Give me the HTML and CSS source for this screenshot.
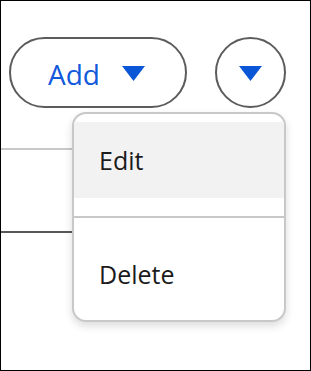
FILE: index.html
```html
<!DOCTYPE html>
<html>
<head>
<meta charset="utf-8">
<link rel="stylesheet" href="styles.css">
</head>
<body>
<div class="frame">
  <div class="toolbar">
    <button class="btn-add">
      <span class="btn-label">Add</span>
      <svg class="caret" width="23" height="15" viewBox="0 0 23 15"><polygon points="0,0 23,0 11.5,15" fill="#0b56d6"/></svg>
    </button>
    <button class="btn-circle">
      <svg class="caret" width="23" height="15" viewBox="0 0 23 15"><polygon points="0,0 23,0 11.5,15" fill="#0b56d6"/></svg>
    </button>
  </div>
  <div class="rows">
    <div class="line line-light"></div>
    <div class="line line-dark"></div>
  </div>
  <div class="menu">
    <div class="menu-item active">Edit</div>
    <div class="menu-divider"></div>
    <div class="menu-item">Delete</div>
  </div>
</div>
</body>
</html>
```
FILE: styles.css
```css
html, body {
  margin: 0;
  padding: 0;
  background: #fff;
}
.frame {
  position: relative;
  width: 311px;
  height: 371px;
  box-sizing: border-box;
  border: 1px solid #000;
  font-family: "Open Sans", "Noto Sans", sans-serif;
  overflow: hidden;
}
.toolbar {
  display: flex;
  align-items: center;
  gap: 28px;
  margin-top: 36px;
  padding-left: 8px;
}
.btn-add {
  box-sizing: border-box;
  width: 178px;
  height: 71px;
  border: 2px solid #5c5c5c;
  border-radius: 36px;
  background: #fff;
  display: flex;
  align-items: center;
  padding: 0 0 0 37px;
  gap: 22px;
  font-family: inherit;
  cursor: pointer;
}
.btn-label {
  font-size: 28px;
  color: #1259dc;
  line-height: 1;
  margin-top: 2px;
}
.btn-circle {
  box-sizing: border-box;
  width: 71px;
  height: 71px;
  border: 2px solid #5c5c5c;
  border-radius: 50%;
  background: #fff;
  display: flex;
  align-items: center;
  justify-content: center;
  padding: 0;
  cursor: pointer;
}
.caret {
  display: block;
  margin-top: 2px;
}
.rows {
  display: flex;
  flex-direction: column;
}
.line {
  width: 100px;
  height: 2px;
}
.line-light {
  background: #c8c8c8;
  margin-top: 40px;
}
.line-dark {
  background: #585858;
  margin-top: 81px;
}
.menu {
  position: absolute;
  left: 71px;
  top: 111px;
  width: 214px;
  box-sizing: border-box;
  border: 2px solid #c8c8c8;
  border-radius: 14px;
  background: #fff;
  padding: 8px 0;
  box-shadow: 0 4px 8px rgba(0, 0, 0, 0.14);
}
.menu-item {
  height: 76px;
  display: flex;
  align-items: center;
  padding-left: 25px;
  font-size: 25px;
  color: #1b1b1b;
}
.menu-item.active {
  background: #f2f2f2;
}
.menu-divider {
  height: 2px;
  background: #c8c8c8;
  margin: 18px 0;
}
```
